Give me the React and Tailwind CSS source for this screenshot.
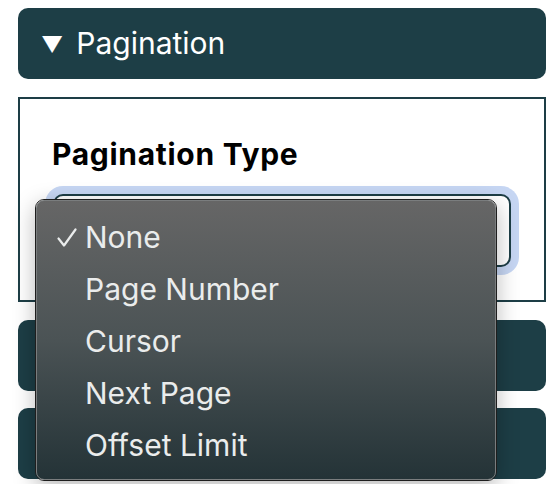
import React from 'react';

const OPTIONS = ['None', 'Page Number', 'Cursor', 'Next Page', 'Offset Limit'];

function Bar({ children }) {
    return (
        <div className="h-[71px] rounded-[10px] bg-[#1d3e46] flex items-center pl-[23px] text-white text-[30px] font-['Inter',sans-serif]">
            {children}
        </div>
    );
}

export default function App() {
    const selected = 'None';

    return (
        <div className="relative w-[560px] h-[484px] overflow-hidden bg-white pt-2 pl-[18px] pr-[14px]">
            <Bar>
                <span className="text-[22px] mr-[13px] leading-none">▼</span>
                <span>Pagination</span>
            </Bar>

            {/* Pagination panel */}
            <div className="mt-[18px] h-[205px] border-2 border-[#1d3e46] pl-[32px] pr-[33px] pt-[38px]">
                <div className="text-[30px] font-bold text-black leading-[34px] tracking-[0.7px] font-['Inter',sans-serif]">Pagination Type</div>
                <div className="mt-[23px] ml-[1px] h-[73px] rounded-[10px] border-2 border-[#1d3e46] bg-white shadow-[0_0_0_8px_#c6d6f3]"></div>
            </div>

            <div className="mt-[18px] flex flex-col gap-[17px]">
                <Bar />
                <Bar />
            </div>

            {/* Native-looking select menu */}
            <div className="absolute left-[35px] top-[199px] w-[462px] h-[282px] rounded-[9px] border border-[#1e1e1e] shadow-[0_6px_22px_rgba(0,0,0,0.28)]">
                <div className="h-full w-full rounded-[8px] border border-[#7a7d7e] bg-gradient-to-b from-[#666666] via-[#4b5355] to-[#243337] pt-[10px] font-['Inter',sans-serif]">
                    {OPTIONS.map(opt => (
                        <div key={opt} className="h-[52px] flex items-center text-[#eaecec] text-[30px]">
                            <span className="w-[48px] shrink-0 pl-[20px] flex items-center">
                                {opt === selected && (
                                    <svg width="20" height="19" viewBox="0 0 20 19" fill="none" stroke="#eaecec" strokeWidth="2.2" strokeLinecap="round" strokeLinejoin="round" className="shrink-0">
                                        <path d="M1.5 10.5 7 17.5 18.5 1.5" />
                                    </svg>
                                )}
                            </span>
                            <span>{opt}</span>
                        </div>
                    ))}
                </div>
            </div>
        </div>
    );
}
